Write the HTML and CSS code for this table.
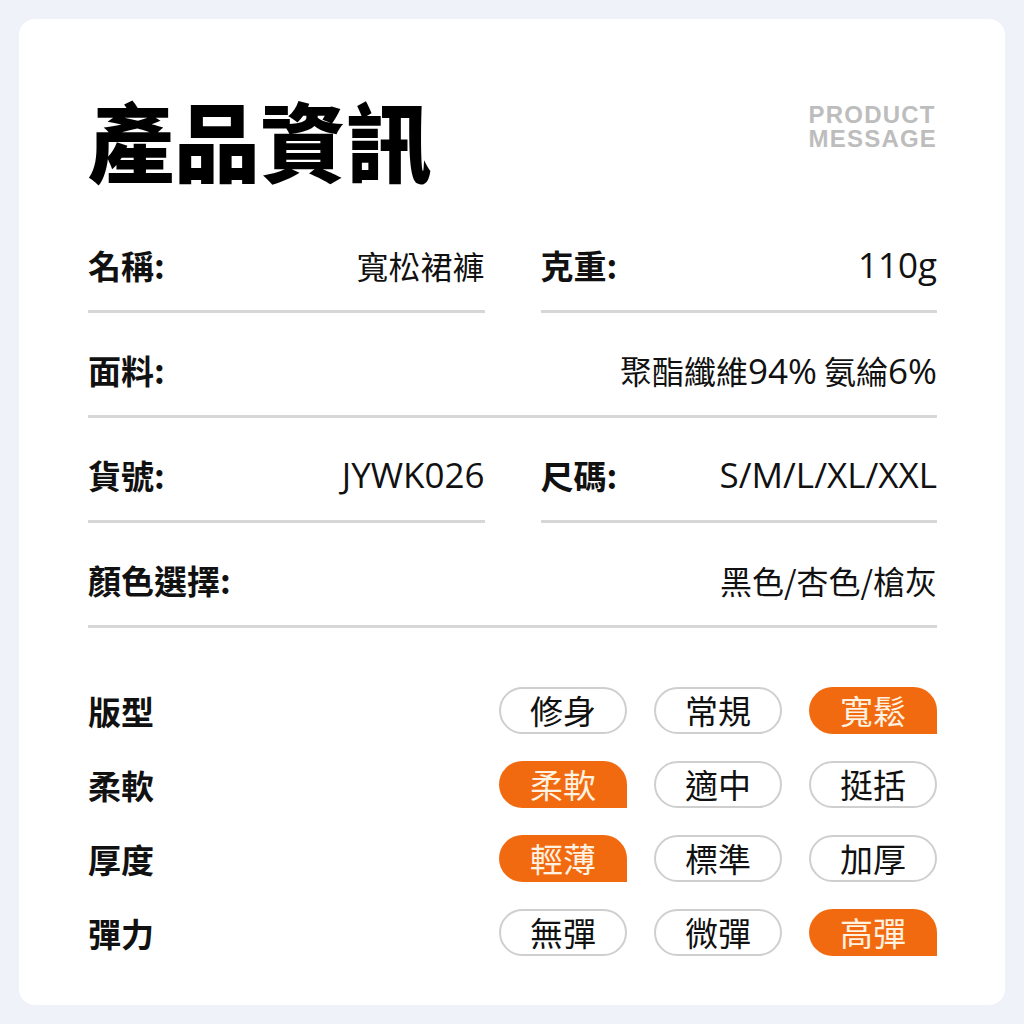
FILE: index.html
```html
<!DOCTYPE html>
<html>
  <head>
    <meta charset="utf-8" />
    <title>產品資訊</title>
    <link rel="stylesheet" href="styles.css">
  </head>
  <body>
    <div class="card">
      <div class="header">
        <div class="title">產品資訊</div>
        <div class="title-en">
          <div>PRODUCT</div>
          <div>MESSAGE</div>
        </div>
      </div>

      <div class="info">
        <div class="info-cell">
          <span class="label">名稱:</span>
          <span class="value">寬松裙褲</span>
        </div>
        <div class="info-cell">
          <span class="label">克重:</span>
          <span class="value latin">110g</span>
        </div>
        <div class="info-cell wide">
          <span class="label">面料:</span>
          <span class="value">聚酯纖維<span class="latin">94%</span> 氨綸<span class="latin">6%</span></span>
        </div>
        <div class="info-cell">
          <span class="label">貨號:</span>
          <span class="value latin">JYWK026</span>
        </div>
        <div class="info-cell">
          <span class="label">尺碼:</span>
          <span class="value latin">S/M/L/XL/XXL</span>
        </div>
        <div class="info-cell wide">
          <span class="label">顏色選擇:</span>
          <span class="value">黑色/杏色/槍灰</span>
        </div>
      </div>

      <div class="options">
        <div class="option-row">
          <span class="label">版型</span>
          <div class="pills">
            <span class="pill">修身</span>
            <span class="pill">常規</span>
            <span class="pill active">寬鬆</span>
          </div>
        </div>
        <div class="option-row">
          <span class="label">柔軟</span>
          <div class="pills">
            <span class="pill active">柔軟</span>
            <span class="pill">適中</span>
            <span class="pill">挺括</span>
          </div>
        </div>
        <div class="option-row">
          <span class="label">厚度</span>
          <div class="pills">
            <span class="pill active">輕薄</span>
            <span class="pill">標準</span>
            <span class="pill">加厚</span>
          </div>
        </div>
        <div class="option-row">
          <span class="label">彈力</span>
          <div class="pills">
            <span class="pill">無彈</span>
            <span class="pill">微彈</span>
            <span class="pill active">高彈</span>
          </div>
        </div>
      </div>
    </div>
  </body>
</html>
```

FILE: styles.css
```css
body {
  margin: 0;
  padding: 19px;
  background: #eff3f9;
  font-family: "Noto Sans CJK TC", "Noto Sans", sans-serif;
  color: #111;
}

.card {
  background: #fff;
  border-radius: 16px;
  height: 986px;
  box-sizing: border-box;
  padding: 77px 68px 0 69px;
}

.header {
  display: flex;
  justify-content: space-between;
  align-items: flex-start;
  margin-bottom: 26px;
}

.title {
  font-size: 86px;
  font-weight: 900;
  line-height: 86px;
  color: #000;
}

.title-en {
  margin-top: 7px;
  font-family: "Liberation Sans", Arial, sans-serif;
  font-weight: 700;
  font-size: 24px;
  line-height: 24px;
  letter-spacing: 1.2px;
  color: #bdbdbd;
}

.info {
  display: grid;
  grid-template-columns: 1fr 1fr;
  column-gap: 56px;
}

.info-cell {
  display: flex;
  justify-content: space-between;
  align-items: center;
  height: 105px;
  box-sizing: border-box;
  padding: 37px 0 25px;
  border-bottom: 3px solid #d7d7d7;
}

.info-cell.wide {
  grid-column: span 2;
}

.label {
  font-size: 33px;
  font-weight: 700;
  line-height: 40px;
}

.value {
  font-size: 32px;
  font-weight: 400;
  line-height: 40px;
}

.latin {
  font-family: "Open Sans", "Noto Sans", sans-serif;
  font-size: 35px;
  font-weight: 500;
}

.options {
  margin-top: 59px;
  display: flex;
  flex-direction: column;
  gap: 27px;
}

.option-row {
  display: flex;
  justify-content: space-between;
  align-items: center;
}

.pills {
  display: flex;
  gap: 27px;
}

.pill {
  width: 128px;
  height: 47px;
  box-sizing: border-box;
  border: 2px solid #cfcfcf;
  border-radius: 24px;
  display: flex;
  justify-content: center;
  align-items: center;
  font-size: 33px;
  line-height: 1;
  color: #111;
}

.pill.active {
  border: none;
  border-radius: 24px 24px 0 24px;
  background: #f26a10;
  color: #fff2e0;
}
```
